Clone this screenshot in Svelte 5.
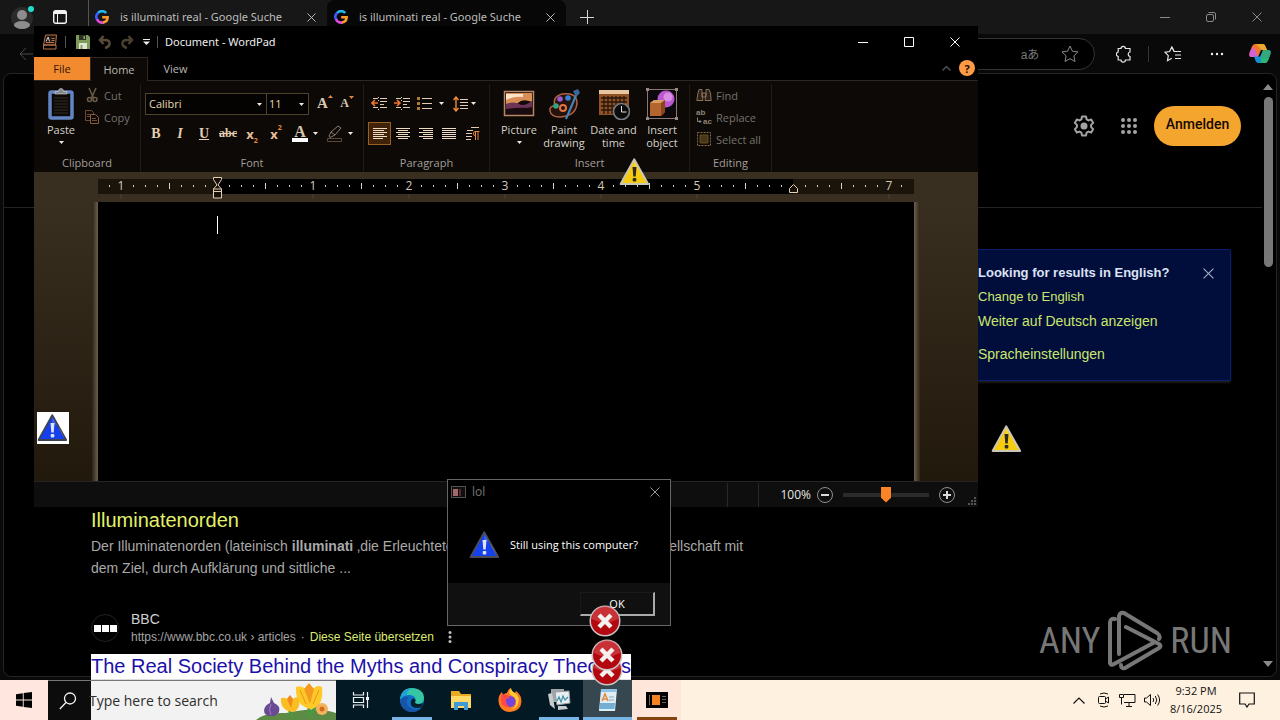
<script>
  let zoom = $state(50);
  let body = $state('');

  const tabs = [
    { title: 'is illuminati real - Google Suche', active: false },
    { title: 'is illuminati real - Google Suche', active: true }
  ];

  const formats = ['bold', 'italic', 'underline', 'strike', 'sub', 'sup'];
  const aligns = [
    { name: 'Align left', lines: [[0, 14], [0, 11], [0, 14], [0, 11], [0, 14], [0, 10]], on: true },
    { name: 'Center', lines: [[0, 14], [2, 12], [0, 14], [2, 12], [0, 14], [2, 12]] },
    { name: 'Align right', lines: [[0, 14], [4, 14], [0, 14], [4, 14], [0, 14], [4, 14]] },
    { name: 'Justify', lines: [[0, 14], [0, 14], [0, 14], [0, 14], [0, 14], [0, 14]] }
  ];

  // Ruler: one inch is 96 units, the left margin sits at 119.
  const origin = 119;
  const ticks = [];
  for (let i = -9; i <= 57; i++) {
    if (i % 8 !== 0) ticks.push({ x: origin + i * 12, half: i % 4 === 0 });
  }
  const inches = [-1, 1, 2, 3, 4, 5, 7];
</script>

{#snippet google()}
  <svg class="g" width="14" height="14" viewBox="0 0 14 14" fill="none" stroke-width="2.6" aria-hidden="true">
    <path d="M11.2 3A5.5 5.5 0 0 0 3 3" stroke="#22b8f0" />
    <path d="M3.2 2.8A5.5 5.5 0 0 0 2.2 9.6" stroke="#3a5cff" />
    <path d="M2 9.3A5.5 5.5 0 0 0 8.4 12.4" stroke="#e04be0" />
    <path d="M8 12.5A5.5 5.5 0 0 0 12.6 7.2H7.2" stroke="#ff9a30" />
  </svg>
{/snippet}

{#snippet cross(s)}
  <svg width={s} height={s} viewBox="0 0 10 10" fill="none" stroke="currentColor" aria-hidden="true"><path d="M.5.5l9 9M9.5.5l-9 9" /></svg>
{/snippet}

{#snippet caret()}
  <svg class="caret" width="5" height="3" viewBox="0 0 5 3" aria-hidden="true"><path d="M0 0h5L2.500 3z" fill="#f2e9dc" /></svg>
{/snippet}

{#snippet triangle(fill, edge, mark)}
  <svg width="32" height="32" viewBox="1 0 32 32" aria-hidden="true">
    <path d="M15.600 2.500Q16.400 1.600 17.200 2.900L31 27.500Q31.400 29 30 29H3Q1 29 2 27z" fill={edge} />
    <path d="M16.300 5L28.600 27H4z" fill={fill} />
    <path d="M16.300 5L28.600 27Q24 13 16.300 11z" fill="#fff" opacity=".18" />
    <path d="M14.500 11h4l-.8 9.500h-2.400z" fill={mark} />
    <rect x="14.700" y="22" width="3.600" height="3.400" rx=".8" fill={mark} />
  </svg>
{/snippet}

{#snippet failure()}
  <svg width="32" height="32" viewBox="0 0 32 32" aria-hidden="true">
    <circle cx="16" cy="16" r="15.500" fill="#c9c5c5" />
    <circle cx="16" cy="16" r="14" fill="#b3080f" />
    <path d="M3 14a13 13 0 0 1 26 0q-13 7-26 0z" fill="#d8565a" opacity=".55" />
    <path d="M10 10l12 12M22 10L10 22" stroke="#f5f1ee" stroke-width="4.400" />
  </svg>
{/snippet}

<div class="desktop">
  <section class="browser" aria-label="Browser">
    <div class="strip">
      <button class="avatar" aria-label="Profile">
        <svg width="28" height="26" viewBox="0 0 28 26"><circle cx="12" cy="14" r="11" fill="#2b2b2b" /><circle cx="12" cy="11" r="5" fill="#8d8d8d" /><ellipse cx="12" cy="21" rx="8" ry="4" fill="#8d8d8d" /><circle cx="21" cy="5" r="3" fill="#1fe0d0" /></svg>
      </button>
      <button class="tabmenu" aria-label="Tab actions">
        <svg width="14" height="14" viewBox="0 0 14 14" fill="none" stroke="#f4f4f4"><rect x=".7" y=".7" width="12.600" height="12.600" rx="2" stroke-width="1.400" /><path d="M1 2.500h12" stroke-width="3" /><path d="M4.500 4v9" /></svg>
      </button>
      {#each tabs as tab}
        <div class="tab" class:active={tab.active}>
          {@render google()}
          <span class="tabname">{tab.title}</span>
          <button aria-label="Close tab">{@render cross(9)}</button>
        </div>
      {/each}
      <button class="newtab" aria-label="New tab">
        <svg width="14" height="14" viewBox="0 0 14 14" stroke="#d8d8d8"><path d="M7.500 0v14M0 7.500h14" /></svg>
      </button>
      <div class="controls dim">
        <button aria-label="Minimize"><svg width="10" height="10" viewBox="0 0 10 10" stroke="currentColor"><path d="M0 5.500h10" /></svg></button>
        <button aria-label="Restore"><svg width="10" height="10" viewBox="0 0 10 10" stroke="currentColor" fill="none"><rect x=".5" y="2.500" width="7" height="7" rx="1.500" /><path d="M2.500.5H8Q9.500.5 9.500 2v5.500" /></svg></button>
        <button aria-label="Close">{@render cross(10)}</button>
      </div>
    </div>

    <div class="toolbar">
      <button class="back" aria-label="Back"><svg width="14" height="14" viewBox="0 0 14 14" fill="none" stroke="#4a4a4a"><path d="M14 7H1M7 1L1 7l6 6" /></svg></button>
      <div class="address">
        <button aria-label="Translate" class="lang">aあ</button>
        <button aria-label="Favorite"><svg width="18" height="18" viewBox="0 0 18 18" fill="none" stroke="#8a8a8a"><path d="M9 1l2.400 5.200 5.600.7-4.100 3.900 1.100 5.700L9 13.700l-5 2.800 1.100-5.700L1 6.900l5.600-.7z" /></svg></button>
      </div>
      <button aria-label="Extensions"><svg width="16" height="18" viewBox="0 0 16 18" fill="none" stroke="#e6e6e6" stroke-width="1.200"><path d="M5 3.500a2.200 2.200 0 0 1 4.400 0H14V7a2.300 2.300 0 0 0 0 4.500V15H9.400a2.200 2.200 0 0 1-4.400 0H2.200V11.500a2.300 2.300 0 0 1 0-4.500V3.500z" /></svg></button>
      <i class="rule"></i>
      <button aria-label="Favorites"><svg width="18" height="16" viewBox="0 0 18 16" fill="none" stroke="#e6e6e6" stroke-width="1.200"><path d="M10 5.500L7.800 1 5.600 5.500 1 6.200l3.300 3.400-.8 5.100 4.300-2.400M8 1l2.200 4.500H17M11 9h6M11 12.500h6" /></svg></button>
      <button aria-label="More"><svg width="14" height="4" viewBox="0 0 14 4" fill="#f0f0f0"><circle cx="2" cy="2" r="1.200" /><circle cx="7" cy="2" r="1.200" /><circle cx="12" cy="2" r="1.200" /></svg></button>
      <button class="copilot" aria-label="Copilot">
        <svg width="22" height="21" viewBox="0 0 22 21">
          <path d="M6 1h8q2 0 2.700 3L18 7h-6L9 14H3Q-.5 14 .6 10L3 3.500Q4 1 6 1z" fill="#f2762e" />
          <path d="M1 8l4-4 4 10H3Q-.5 14 .6 10z" fill="#d261d8" />
          <path d="M7 1h7q2 0 2.700 3L18 7h-5z" fill="#e9a92c" />
          <path d="M16 20H9q-2 0-2.700-3L5 13.500h6L14 7h5q3.500 0 2.400 4L19 17.500Q18 20 16 20z" fill="#168fd8" />
          <path d="M14 7h5q3.500 0 2.400 4l-1.200 3.500H11.500z" fill="#35a87b" />
          <path d="M11.500 14.500h8.600L19 17.500Q18 20 16 20h-4z" fill="#2bb673" />
        </svg>
      </button>
    </div>

    <div class="page">
      <main>
        <header>
          <button aria-label="Settings"><svg width="22" height="22" viewBox="0 0 22 22"><path d="M9 1.500h4l.6 2.800 1.900 1.100 2.700-.9 2 3.400-2.100 2v2.200l2.100 2-2 3.400-2.700-.9-1.900 1.100-.6 2.800H9l-.6-2.800-1.900-1.100-2.700.9-2-3.400 2.100-2V9.900l-2.100-2 2-3.400 2.700.9 1.900-1.100z" fill="none" stroke="#a3a3a3" stroke-width="2" stroke-linejoin="round" /><circle cx="11" cy="11" r="3.500" fill="#a3a3a3" /></svg></button>
          <button class="grid" aria-label="Google apps"><svg width="18" height="18" viewBox="0 0 18 18" fill="#a3a3a3">{#each [3, 9, 15] as y}{#each [3, 9, 15] as x}<circle cx={x} cy={y} r="2" />{/each}{/each}</svg></button>
          <button class="signin">Anmelden</button>
        </header>
        <aside>
          <div class="asidehead"><strong>Looking for results in English?</strong><button aria-label="Dismiss">{@render cross(11)}</button></div>
          <a class="small" href="#en">Change to English</a>
          <a href="#de">Weiter auf Deutsch anzeigen</a>
          <a class="last" href="#lang">Spracheinstellungen</a>
        </aside>
        <article>
          <h3><a href="#orden">Illuminatenorden</a></h3>
          <p>Der Illuminatenorden (lateinisch <b>illuminati</b> ‚die Erleuchteten‘) war eine kurzlebige Geheimgesellschaft mit<br />dem Ziel, durch Aufklärung und sittliche ...</p>
          <div class="source">
            <span class="logo"><i></i><i></i><i></i></span>
            <div>
              <div class="name">BBC</div>
              <div class="url"><span>https://www.bbc.co.uk › articles</span><span>·</span><a href="#translate">Diese Seite übersetzen</a><button aria-label="About this result"><svg width="4" height="12" viewBox="0 0 4 12" fill="#c0c0c0"><circle cx="2" cy="1.500" r="1.500" /><circle cx="2" cy="6" r="1.500" /><circle cx="2" cy="10.500" r="1.500" /></svg></button></div>
            </div>
          </div>
          <h3 class="selected"><a href="#bbc">The Real Society Behind the Myths and Conspiracy Theories</a></h3>
        </article>
      </main>
      <div class="scroll">
        <svg width="10" height="6" viewBox="0 0 10 6"><path d="M5 0l5 6H0z" fill="#8a8a8a" /></svg>
        <i></i>
        <svg class="down" width="10" height="6" viewBox="0 0 10 6"><path d="M0 0h10L5 6z" fill="#8a8a8a" /></svg>
      </div>
    </div>
  </section>

  <footer class="taskbar">
    <button class="start" aria-label="Start"><svg width="16" height="16" viewBox="0 0 16 16" fill="#000"><path d="M0 2.200l6.800-1v6.300H0zM7.700 1.100L16 0v7.500H7.700zM0 8.400h6.800v6.400L0 13.800zM7.700 8.400H16V16l-8.300-1.100z" /></svg></button>
    <label class="search">
      <svg width="18" height="18" viewBox="0 0 18 18" fill="none" stroke="#f4f4f4" stroke-width="1.300"><circle cx="11" cy="6.500" r="5.500" /><path d="M7 10.500L.8 17" /></svg>
      <input type="text" placeholder="Type here to search" aria-label="Search" />
      <svg class="flowers" width="80" height="38" viewBox="0 0 80 38">
        <path d="M0 38q8-8 30-7 30-7 50 0v7z" fill="#5d8a45" />
        <path d="M53 22v14M33 27l4 10M52 35l10-13" stroke="#4a9a3c" stroke-width="3" fill="none" />
        <path d="M15 15l3 6q7 3 5 9-3 5-8 4-7 0-7-6 1-5 6-7z" fill="#6a4a92" /><path d="M15 22q-3 6 0 11" stroke="#9b7bc0" fill="none" />
        <path d="M25 16q4-1 6 1 3-5 6 0 3-3 6-1 2 13-7 14-12-2-11-14z" fill="#fbbd21" /><path d="M31 17l3-4 3 4-2 9z" fill="#f08a1c" />
        <path d="M40 5q6-2 9 2 4-8 8 0 4-5 9-2 2 20-11 22-16-3-15-22z" fill="#ffc928" /><path d="M48 7l5-6 5 6-4 15z" fill="#f59a20" /><path d="M44 8l6 14M63 8l-6 14" stroke="#e9961b" fill="none" />
        <circle cx="66" cy="27" r="6" fill="#f4b45d" /><circle cx="66" cy="27" r="2.500" fill="#d46a1e" />
      </svg>
    </label>
    <div class="apps">
      <button aria-label="Task view"><svg width="18" height="18" viewBox="0 0 18 18" fill="none" stroke="#f0f0f0" stroke-width="1.200"><path d="M1.500 1v3h10V1M1.500 17v-3h10v3M1.500 6.500h10v5h-10zM15.500 1v16" /><path d="M14 6h3v3h-3z" fill="#f0f0f0" stroke="none" /></svg></button>
      <button class="open" aria-label="Edge"><svg width="24" height="24" viewBox="0 0 24 24"><circle cx="12" cy="12" r="12" fill="#0f6fc8" /><path d="M.2 11Q1.500 0 12.500 0 24 1 24 10.500q-.5 5.500-6 5.500-4.500 0-3-2.500Q17 8 10 7 3.500 6.500.2 11z" fill="#35c6a4" /><path d="M.2 11Q1.500 1 12 0q-6 3-5 7Q2.500 8 .2 11z" fill="#1ba1dc" /><path d="M9 9q-5 5 0 10 6 5 12.500.5Q17 25 9.500 23.700 0 20 .3 12 4 7.500 9 9z" fill="#1754a6" /><path d="M15.500 13q-1.500 3 2.500 3 3.500.2 5-1.500-.3 3.500-2 5Q13 21 11 17q-1-5 2-6.500 3 .5 2.500 2.500z" fill="#06202c" /></svg></button>
      <button aria-label="File Explorer"><svg width="22" height="20" viewBox="0 0 22 20"><path d="M1 1h8l2 3h10v14H1z" fill="#e9a921" /><path d="M1 6h20v12H1z" fill="#ffd968" /><path d="M4 12h14v8h-4v-4H8v4H4z" fill="#3f9ad6" /></svg></button>
      <button aria-label="Firefox"><svg width="24" height="24" viewBox="0 0 24 24"><path d="M12 24C4 24 .5 18 .5 12 .5 8 2 6 4 4l1 3q2-2 4-2 1-4 4-5 0 3 4 5l1-2q5.500 4 5.500 10.500Q23 23 12 24z" fill="#ff7a1f" /><path d="M13 0q0 3 4 5 5 4 3.500 10Q18 22 12 21.500q7-2 6-9-1-4-6-6-2-2 1-6.500z" fill="#ffca35" /><circle cx="12" cy="13.500" r="5.500" fill="#7544dd" /><path d="M3 7q5-2 9 2-1 2-4 2-1 5 4 8-8 1-9-6z" fill="#ff4a45" /></svg></button>
      <button class="open" aria-label="System monitor"><svg width="24" height="22" viewBox="0 0 24 22"><path d="M4 0h13v13H4z" fill="#9fa4a8" /><path d="M8 3l14-1 1 12-13 2z" fill="#e7edf0" stroke="#969c9f" /><path d="M10 12l2-4 2 5 2-6 2 4 3-3" fill="none" stroke="#3b8da9" stroke-width="1.200" /><path d="M11 17h8l2 3-10 1zM1 5l4-1 3 16-5-4z" fill="#c7cbce" /></svg></button>
      <button class="open current" aria-label="WordPad"><svg width="20" height="22" viewBox="0 0 20 22"><path d="M3 0h16l-2 22H1z" fill="#e1edf5" /><path d="M3 0h16v3H3z" fill="#8fc2e3" /><path d="M2 14h15l-.5 6H1.500z" fill="#6fb1db" /><path d="M11 8h5M11 11h5M4 16h11" stroke="#87a9be" /><path d="M4 12l3-7 3 7M5 10h4" stroke="#e08a3a" stroke-width="1.500" fill="none" /></svg></button>
      <button class="open payload" aria-label="lol"><svg width="22" height="16" viewBox="0 0 22 16"><path d="M0 0h22v16H0z" /><path d="M6 3h8v10H6z" fill="#f58220" /><path d="M3.500 3v10M16 4.500h4M16 7.500h4M16 10.500h4" stroke="#6d655c" /></svg></button>
    </div>
    <div class="tray">
      <svg width="12" height="7" viewBox="0 0 12 7" fill="none" stroke="#111" stroke-width="1.200"><path d="M.5 6.500L6 1l5.500 5.500" /></svg>
      <svg width="14" height="16" viewBox="0 0 14 16" fill="none" stroke="#111"><path d="M3 2q4-2 8 0M3 14q4 2 8 0M1.500 5.500q0-1 1-1h5q1 0 1 1v5q0 1-1 1h-5q-1 0-1-1zM8.500 7l3-2v6l-3-2" /></svg>
      <svg width="17" height="14" viewBox="0 0 17 14" fill="none" stroke="#111"><path d="M5 1.500h11v8H5M.5 1.500h4v3h-4zM2.500 4.500v7M7 13.500h6M10 10v3" /></svg>
      <svg width="17" height="14" viewBox="0 0 17 14" fill="none" stroke="#111"><path d="M.5 5v4h2l4 3.500V1.500L2.500 5zM9 5q1.500 2 0 4M11.300 3q3 4 0 8M13.600 1.500q4 5.500 0 11" /></svg>
      <div class="clock"><span>9:32 PM</span><span>8/16/2025</span></div>
      <svg width="16" height="16" viewBox="0 0 16 16" fill="none" stroke="#111" stroke-width="1.200"><path d="M.7 1h14.600v11H10l-2 3-2-3H.7z" /></svg>
    </div>
  </footer>

  <section class="wordpad" aria-label="WordPad">
    <div class="titlebar">
      <svg width="14" height="16" viewBox="0 0 14 16" fill="none" stroke="#b5754a"><path d="M2.500 1h11l-1 10h-12z" fill="#20130b" /><path d="M.5 11h12.500v4H.5zM8.500 4.500h3M8.500 6.500h3M3 8.500h8" /><path d="M3 7.500L5.200 3l1.300 4.500" stroke="#cad4db" /></svg>
      <i></i>
      <button aria-label="Save"><svg width="14" height="14" viewBox="0 0 14 14"><path d="M0 0h12l2 2v12H0z" fill="#7f9a59" /><path d="M3 0h7v5H3z" fill="#2a3320" /><path d="M3 8h8v6H3z" fill="#dfe6d3" /><path d="M7.500 1h1.500v3H7.500zM4.500 10h2v4h-2z" fill="#89a068" /></svg></button>
      <button aria-label="Undo"><svg width="14" height="14" viewBox="0 0 14 14" fill="none" stroke="#5a4a38" stroke-width="2.500"><path d="M2 5h5q5 0 4.500 4-.5 3-4.500 4M5.500 1L2 5l3.500 4" /></svg></button>
      <button aria-label="Redo"><svg width="14" height="14" viewBox="0 0 14 14" fill="none" stroke="#4b4030" stroke-width="2.500"><path d="M12 5H7Q2 5 2.500 9q.5 3 4.500 4M8.500 1L12 5 8.500 9" /></svg></button>
      <button class="custom" aria-label="Customize toolbar"><svg width="7" height="6" viewBox="0 0 7 6"><path d="M0 .5h7" stroke="#eee" /><path d="M0 2.500h7L3.500 6z" fill="#eee" /></svg></button>
      <i></i>
      <span class="wtitle">Document - WordPad</span>
      <div class="controls">
        <button aria-label="Minimize"><svg width="10" height="10" viewBox="0 0 10 10" stroke="currentColor"><path d="M0 5.500h10" /></svg></button>
        <button aria-label="Maximize"><svg width="10" height="10" viewBox="0 0 10 10" stroke="currentColor" fill="none"><path d="M.5.500h9v9h-9z" /></svg></button>
        <button aria-label="Close">{@render cross(10)}</button>
      </div>
    </div>
    <nav>
      <button class="file">File</button>
      <button class="home">Home</button>
      <button class="view">View</button>
      <button class="fold" aria-label="Collapse ribbon"><svg width="9" height="5" viewBox="0 0 9 5" fill="none" stroke="#4a5057" stroke-width="1.500"><path d="M.5 4.500l4-4 4 4" /></svg></button>
      <button class="help" aria-label="Help">?</button>
    </nav>

    <div class="ribbon">
      <div class="group clip">
        <div class="tools">
          <button class="big"><svg width="26" height="32" viewBox="0 0 26 32"><rect x="2" y="4" width="22" height="26" rx="1.500" fill="#0c0906" stroke="#6385c4" stroke-width="3.500" /><path d="M7 6V3.500h3.500q0-3 2.500-3t2.500 3H19V6z" fill="#85878a" stroke="#c6c8ca" stroke-width=".7" /><path d="M6 10h14M6 13h14M6 16h14M6 19h14M6 22h14M6 25h14" stroke="#332c24" /></svg><span>Paste</span>{@render caret()}</button>
          <div class="rows">
            <button><svg width="16" height="16" viewBox="0 0 16 16" fill="none" stroke="#6e5d48" stroke-width="1.500"><path d="M5 1l4.500 10M12 1L7.500 11" /><circle cx="5.500" cy="12.500" r="2" /><circle cx="11" cy="12.500" r="2" /></svg>Cut</button>
            <button><svg width="16" height="16" viewBox="0 0 16 16" fill="#0c0906" stroke="#6e4a30"><path d="M1.500 1.500h6l2 2v8h-8z" /><path d="M6.500 5.500h5l3 3v6h-8z" stroke="#8a5c3c" /><path d="M8 9.500h4M8 11.500h5M3 5.500h3M3 7.500h3" /></svg>Copy</button>
          </div>
        </div>
        <div class="label">Clipboard</div>
      </div>

      <div class="group font">
        <div class="tools col">
          <div class="line first">
            <div class="combo family"><select aria-label="Font family"><option>Calibri</option></select>{@render caret()}</div>
            <div class="combo size"><select aria-label="Font size"><option>11</option></select>{@render caret()}</div>
            <button class="grow" aria-label="Grow font">A<svg width="5" height="3" viewBox="0 0 5 3"><path d="M2.500 0L5 3H0z" fill="#e08440" /></svg></button>
            <button class="shrink" aria-label="Shrink font">A<svg width="5" height="3" viewBox="0 0 5 3"><path d="M0 0h5L2.500 3z" fill="#e08440" /></svg></button>
          </div>
          <div class="line formats">
            {#each formats as f}
              <button class="fmt {f}" aria-label={f}>
                {#if f === 'bold'}B{:else if f === 'italic'}I{:else if f === 'underline'}U{:else if f === 'strike'}abc{:else if f === 'sub'}x<sub>2</sub>{:else}x<sup>2</sup>{/if}
              </button>
            {/each}
            <button class="colour" aria-label="Text color"><span>A</span>{@render caret()}</button>
            <button class="colour" aria-label="Highlight"><svg width="17" height="17" viewBox="0 0 17 17" fill="none" stroke="#8d7c6c"><path d="M3 11L5 7l7-6 3 2-6 7-5 2.500zM5 7l4 3" /><path d="M1.500 13.500h14v3h-14z" stroke="#5c4638" /></svg>{@render caret()}</button>
          </div>
        </div>
        <div class="label">Font</div>
      </div>

      <div class="group para">
        <div class="tools col">
          <div class="line first">
            {#each [0, 1] as d}
              <button class="p" aria-label={d ? 'Increase indent' : 'Decrease indent'}><svg width="16" height="14" viewBox="0 0 16 14" stroke="#e2cdb4"><path d="M2 1.500h5M9 1.500h7M9 4.500h7M9 7.500h4M2 10.500h5M9 10.500h7M7.500 0v1M7.500 3v1M7.500 12v1" /><path d={d ? 'M0 6h6M3 3l3 3-3 3' : 'M7 6H1M4 3L1 6l3 3'} stroke="#ef7430" stroke-width="1.600" fill="none" /></svg></button>
            {/each}
            <button class="pd" aria-label="Bullets"><svg width="15" height="14" viewBox="0 0 15 14"><path d="M5 1.500h10M5 6.500h10M5 11.500h10" stroke="#e2cdb4" /><path d="M0 0h3v3H0zM0 5h3v3H0zM0 10h3v3H0z" fill="#b07a34" /></svg>{@render caret()}</button>
            <button class="pd tight" aria-label="Line spacing"><svg width="15" height="16" viewBox="0 0 15 16" stroke="#e2cdb4"><path d="M7 3.500h8M7 6.500h8M7 9.500h8M7 12.500h8" /><path d="M3 1v14M.5 4L3 1l2.500 3M.5 12L3 15l2.500-3" fill="none" stroke="#f08a3a" stroke-width="1.400" /></svg>{@render caret()}</button>
          </div>
          <div class="line">
            {#each aligns as a}
              <button class="p" class:on={a.on} aria-label={a.name}><svg width="14" height="12" viewBox="0 0 14 12" stroke="#efdcc5">{#each a.lines as [s, e], i}<path d="M{s} {i * 2 + 0.5}h{e - s}" />{/each}</svg></button>
            {/each}
            <button class="p last" aria-label="Paragraph"><svg width="15" height="14" viewBox="0 0 15 14" stroke="#e2cdb4"><path d="M5 .5h8M1 3.500h6M0 6.500h6M0 9.500h6M0 12.500h5" /><path d="M9.500 4v9M12 4v9M13.500 4.500H9Q7 5 7.500 7t2 1.500" stroke="#e8823c" fill="none" /></svg></button>
          </div>
        </div>
        <div class="label">Paragraph</div>
      </div>

      <div class="group insert">
        <div class="tools">
          <button class="big"><svg width="32" height="32" viewBox="0 0 32 32"><path d="M1.500 3.500h29v24h-29z" fill="#120a08" stroke="#b8876a" stroke-width="1.500" /><path d="M3 5h26v9q-10-4-14 1T3 16z" fill="#d98e58" /><path d="M3 6h17v3q-9-1-17 3z" fill="#ffe3c9" /><path d="M3 16q8-3 13 0t13-3v6q-14 4-26 2z" fill="#6e3458" /><path d="M3 21q12-2 26-1v6H3z" fill="#190b10" /></svg><span>Picture</span>{@render caret()}</button>
          <button class="big wide"><svg width="32" height="32" viewBox="0 0 32 32"><path d="M14 6q14-2 15 8 0 14-17 15-9 0-10-6-1-5 5-5-3-9 7-12z" fill="#25120c" stroke="#b06243" stroke-width="1.500" /><circle cx="8" cy="18" r="2.800" fill="#33a184" /><circle cx="12" cy="11" r="2.800" fill="#9c5ad0" /><circle cx="20" cy="10" r="2.800" fill="#3682d8" /><circle cx="15" cy="20" r="3" fill="none" stroke="#e37344" stroke-width="2" /><path d="M29 5L18 31l6-14z" fill="#89b8dd" stroke="#4087bd" stroke-width="2" /><path d="M25 3l5-2 2 4-4 4z" fill="#38689b" /></svg><span>Paint<br />drawing</span></button>
          <button class="big wider"><svg width="32" height="32" viewBox="0 0 32 32"><path d="M1 2h30v25H1z" fill="#8f5126" /><path d="M1 2h30v4H1z" fill="#e8c7a0" /><path d="M3 10h26M3 14h26M3 18h26M3 22h26M6 8v18M10 8v18M14 8v18M18 8v18M22 8v18M26 8v18" stroke="#2a160b" stroke-width="1.300" /><circle cx="23.500" cy="23.500" r="8" fill="#0c0b0b" stroke="#727980" stroke-width="1.700" /><path d="M23.500 18v6h5" fill="none" stroke="#dce1e5" /></svg><span>Date and<br />time</span></button>
          <button class="big slim"><svg width="32" height="32" viewBox="0 0 32 32"><path d="M1.500 1.500h29v29h-29z" fill="#0b090b" stroke="#8b7770" /><circle cx="20" cy="11" r="8.500" fill="#b958cf" /><circle cx="22" cy="9" r="4.500" fill="#d98de5" /><path d="M4 15l4-3h11v12l-4 4H4z" fill="#b4652d" /><path d="M4 15l4-3h11l-4 3z" fill="#dc9c62" /><path d="M15 15l4-3v12l-4 4z" fill="#8c451b" /><path d="M0 0h3v3H0zM29 0h3v3h-3zM0 29h3v3H0zM29 29h3v3h-3z" fill="#958a85" /></svg><span>Insert<br />object</span></button>
        </div>
        <div class="label">Insert</div>
      </div>

      <div class="group edit">
        <div class="tools">
          <div class="rows">
            <button><svg width="16" height="16" viewBox="0 0 16 16" fill="#2c2118" stroke="#8b7158"><path d="M3 2.500h3v5l1 6H.8L2 6zM10 2.500h3L14.500 6l.7 7.500H9l1-6zM6 6h4v4H6z" /></svg>Find</button>
            <button><svg class="swap" width="16" height="18" viewBox="0 0 16 18"><text x="0" y="7">ab</text><text x="7" y="16">ac</text><path d="M1.500 9.500v4H5M3.500 12L5 13.500 3.500 15" fill="none" stroke="#8e8374" /></svg>Replace</button>
            <button><svg width="16" height="16" viewBox="0 0 16 16"><path d="M1.500 1.500h13v13h-13z" fill="none" stroke="#87694a" stroke-dasharray="2 1" /><path d="M4 4h8v8H4z" fill="#463718" stroke="#63501f" /></svg>Select all</button>
          </div>
        </div>
        <div class="label">Editing</div>
      </div>
    </div>

    <div class="ruler">
      <svg width="816" height="26" viewBox="0 0 816 26" aria-hidden="true">
        <path d="M0 6h816v15H0z" />
        <path d="M0 6h119v15H0zM695 6h121v15H695z" fill="#1b140b" />
        {#each ticks as t}
          <path d={t.half ? `M${t.x + 0.5} 10v6` : `M${t.x + 0.5} 12v2`} stroke="#d9cfc0" />
        {/each}
        {#each inches as n}
          <text x={origin + n * 96} y="17" text-anchor="middle" font-size="12" fill="#d6c9b4">{Math.abs(n)}</text>
          <path d="M{origin + n * 96} 21v5" stroke="#4c4131" />
        {/each}
        <g fill="#17110a" stroke="#e4d2b8"><path d="M115.500 4.500h8v2L120 12l3.500 4v9h-8v-9l3.500-4-3.500-5.500zM115.500 18.500h8M115.500 16h8" /><path d="M695.500 11.500l4 4v4h-8v-4z" /></g>
      </svg>
    </div>
    <div class="canvas">
      <div class="sheet"><textarea aria-label="Document text" bind:value={body}></textarea><i></i></div>
    </div>
    <div class="status">
      <i></i><i class="second"></i>
      <span>100%</span>
      <button aria-label="Zoom out"><svg width="16" height="16" viewBox="0 0 16 16" fill="none" stroke="#8f8f8f"><circle cx="8" cy="8" r="7.500" /><path d="M4 8h8" stroke="#dadada" stroke-width="2" /></svg></button>
      <input type="range" min="0" max="100" aria-label="Zoom" bind:value={zoom} />
      <button aria-label="Zoom in"><svg width="16" height="16" viewBox="0 0 16 16" fill="none" stroke="#8f8f8f"><circle cx="8" cy="8" r="7.500" /><path d="M4 8h8M8 4v8" stroke="#dadada" stroke-width="2" /></svg></button>
      <svg class="grip" width="8" height="8" viewBox="0 0 8 8" fill="#555"><path d="M6 0h2v2H6zM3 3h2v2H3zM6 3h2v2H6zM0 6h2v2H0zM3 6h2v2H3zM6 6h2v2H6z" /></svg>
    </div>
  </section>

  <section class="dialog" role="dialog" aria-label="lol">
    <div class="dtitle">
      <svg width="15" height="12" viewBox="0 0 15 12"><path d="M.5.5h14v11H.5z" fill="#140d0d" stroke="#555" /><path d="M2 3h5v7H2z" fill="#a3686c" /><path d="M8 3h2v7H8z" fill="#4d2c2e" /></svg>
      <span>lol</span>
      <button aria-label="Close">{@render cross(10)}</button>
    </div>
    <div class="message">{@render triangle('#1440ee', '#4b4b57', '#dfe4f5')}<span>Still using this computer?</span></div>
    <div class="actions"><button>OK</button></div>
  </section>

  <div class="stray warn1">{@render triangle('#f5cc12', '#c9c6bc', '#2c2a22')}</div>
  <div class="stray warn2">{@render triangle('#f5cc12', '#c9c6bc', '#2c2a22')}</div>
  <div class="stray info">{@render triangle('#1440ee', '#3e4250', '#dfe4f5')}</div>
  <div class="stray fail3">{@render failure()}</div>
  <div class="stray fail2">{@render failure()}</div>
  <div class="stray fail1">{@render failure()}</div>

  <div class="mark">
    <span>ANY</span>
    <svg width="56" height="62" viewBox="0 0 56 62" fill="none" stroke="#777" stroke-width="4" stroke-linejoin="round" stroke-linecap="round"><path d="M8 9Q3 8 3 13v40q1 3 4 1l41-22M12 44V6q1-4 5-3l33 20q4 3 2 6M19 17l33 17q3 2 0 4L18 58q-4 1-4-3" /></svg>
    <span>RUN</span>
  </div>
</div>

<style>
  :global(body) { margin: 0; background: #000; }
  * { box-sizing: border-box; }
  button { font: inherit; color: inherit; background: none; border: 0; padding: 0; margin: 0; display: flex; align-items: center; justify-content: center; }
  svg { display: block; flex: none; }
  a { text-decoration: none; }

  .desktop { position: relative; min-height: 100vh; display: flex; flex-direction: column; overflow: hidden; background: #000; color: #ccc; font: 12px/16px "Open Sans", "Noto Sans", sans-serif; }

  .browser { flex: 1; display: flex; flex-direction: column; background: #090909; }
  .strip { display: flex; height: 34px; background: #171717; }
  .avatar { width: 44px; padding-left: 4px; }
  .tabmenu { width: 32px; margin-right: 12px; }
  .tab { display: flex; align-items: center; gap: 11px; width: 239px; padding: 0 11px 0 6px; border-left: 1px solid #555; }
  .tab.active { background: #070707; border-color: #070707; border-radius: 8px 8px 0 0; }
  .tabname { flex: 1; white-space: nowrap; color: #bdbdbd; font-family: "Noto Sans", sans-serif; font-size: 11px; }
  .newtab { width: 42px; }
  .controls { display: flex; margin-left: auto; }
  .controls button { width: 46px; color: #fff; }
  .controls.dim button { color: #8a8a8a; }

  .toolbar { display: flex; align-items: center; height: 39px; }
  .toolbar button { width: 44px; height: 32px; }
  .toolbar .back { width: 40px; padding-left: 12px; }
  .address { flex: 1; display: flex; justify-content: flex-end; height: 32px; border: 1px solid #333; border-radius: 16px; background: #000; margin-right: 7px; padding-right: 4px; }
  .address button { width: 40px; height: 30px; }
  .address .lang { font: 12px "Liberation Sans", "Noto Sans CJK JP", sans-serif; color: #777; }
  .rule { width: 1px; height: 16px; background: #333; margin: 0 2px; }
  .toolbar .copilot { width: 41px; }

  .page { flex: 1; display: flex; margin: 0 3px 3px; border: 1px solid #242424; border-radius: 8px; background: #000; font-family: "Liberation Sans", Arial, sans-serif; }
  main { flex: 1; display: flex; flex-direction: column; }
  header { display: flex; justify-content: flex-end; gap: 5px; height: 134px; padding: 32px 21px 0 0; border-bottom: 1px solid #242424; }
  header button { width: 40px; height: 40px; }
  header .signin { width: 87px; padding-bottom: 4px; border-radius: 20px; background: #f4a52e; color: #140a00; font: 500 14px Roboto, sans-serif; }
  aside { align-self: flex-end; display: flex; flex-direction: column; width: 273px; height: 132px; margin: 41px 31px 0 0; padding: 11px 16px 0 19px; border: 1px solid #0b1f6e; border-radius: 2px; background: #010d3b; box-shadow: 0 2px 2px #1c1c1c; }
  .asidehead { display: flex; justify-content: space-between; align-items: center; height: 24px; color: #dbe3f5; font-size: 13px; }
  aside a { font-size: 14px; line-height: 24px; color: #cbe66c; }
  aside .small { font-size: 13px; }
  aside .last { margin-top: 9px; }
  .asidehead button { color: #a7b0c6; }
  article { padding: 126px 0 0 87px; margin-bottom: -4px; }
  h3 { margin: 0; font-size: 20px; line-height: 26px; font-weight: 400; }
  h3 a { color: #e2f06a; }
  p { margin: 2px 0 0; font-size: 14px; line-height: 22px; color: #a9a9a9; white-space: nowrap; }
  .source { display: flex; gap: 12px; align-items: center; height: 44px; margin: 27px 0 4px; }
  .logo { display: flex; align-items: center; justify-content: center; gap: 1px; width: 28px; height: 28px; border: 1px solid #222; border-radius: 50%; }
  .logo i { width: 7px; height: 7px; background: #fff; }
  .name { font-size: 14px; line-height: 18px; color: #d0d0d0; }
  .url { display: flex; align-items: center; gap: 5px; font-size: 12px; line-height: 18px; color: #a4a4a4; }
  .url a { color: #dcec70; }
  .url button { margin-left: 9px; }
  .selected { position: relative; width: max-content; background: #fff; border-bottom: 1px solid #ddd; line-height: 25px; }
  .selected a { color: #1c10a8; }
  .scroll { display: flex; flex-direction: column; align-items: center; width: 14px; padding: 10px 2px 9px 0; }
  .scroll i { width: 9px; height: 170px; margin-top: 7px; border-radius: 5px; background: #777; }
  .down { margin-top: auto; }

  .taskbar { display: flex; height: 40px; background: #fff1e0; }
  .start { width: 48px; background: #ffe6de; }
  .search { position: relative; display: flex; align-items: center; width: 288px; background: #0c0c0c; border-top: 1px solid #777; }
  .search > svg:first-child { margin-left: 11px; }
  .search input { flex: 1; align-self: stretch; min-width: 0; margin-left: 12px; padding: 0; border: 0; background: linear-gradient(90deg, #0c0c0c 2px, #f2f2f2 2px); font: 14px "Open Sans", sans-serif; color: #222; outline: 0; }
  .search input::placeholder { color: #2e2e2e; opacity: 1; }
  .search .flowers { position: absolute; right: 0; bottom: 0; }
  .apps { display: flex; background: #031a24; }
  .apps button { width: 49px; border-bottom: 3px solid transparent; border-top: 3px solid transparent; }
  .apps button:first-child { width: 51px; padding-right: 2px; }
  .apps .open { background: linear-gradient(#76b5e5, #76b5e5) bottom / 40px 3px no-repeat border-box; }
  .apps .current { background: linear-gradient(#76b5e5, #76b5e5) bottom / 49px 3px no-repeat border-box, #37474f; }
  .apps .payload { background: linear-gradient(#83450d, #83450d) bottom / 40px 3px no-repeat border-box, #ffe6da; }
  .tray { display: flex; align-items: center; gap: 8px; margin-left: auto; padding-right: 25px; color: #111; }
  .tray svg:first-child { margin-right: 4px; }
  .clock { display: flex; flex-direction: column; align-items: center; width: 54px; margin-right: 8px; line-height: 18px; white-space: nowrap; font-size: 11px; }

  .wordpad { position: absolute; left: 34px; right: 302px; top: 26px; display: flex; flex-direction: column; background: #000; font-size: 11px; line-height: 13px; color: #bdb8b2; }
  .titlebar { display: flex; align-items: center; height: 31px; padding-left: 9px; color: #eee; }
  .titlebar i { width: 1px; height: 12px; background: #555; }
  .titlebar > i:nth-of-type(1) { margin: 0 6px 0 8px; }
  .titlebar > button { width: 22px; }
  .titlebar .custom { width: 16px; margin-right: 3px; }
  .wtitle { margin-left: 7px; font-family: "Noto Sans", sans-serif; }
  .titlebar .controls { align-self: stretch; }
  nav { display: flex; height: 24px; border-bottom: 1px solid #2d2823; }
  nav .file { width: 56px; background: #f28a30; color: #2e1500; }
  nav .home { width: 58px; height: 24px; background: #0c0906; border: 1px solid #2d2823; border-bottom: 0; }
  nav .view { width: 55px; }
  nav .fold { width: 20px; margin-left: auto; }
  nav .help { width: 16px; height: 16px; margin: 3px 3px 0 3px; border-radius: 50%; background: #ff9a45; color: #1e0d00; font-weight: 700; }

  .ribbon { display: flex; height: 91px; padding-top: 3px; background: #0c0906; }
  .group { display: flex; flex-direction: column; border-right: 1px solid #211b14; }
  .tools { display: flex; flex: none; height: 70px; padding: 0 4px; }
  .label { text-align: center; line-height: 18px; height: 18px; color: #a39e98; }
  .clip { width: 107px; }
  .font { width: 223px; }
  .para { width: 126px; }
  .insert { width: 200px; }
  .insert .tools { padding: 0 6px; }
  .edit { width: 82px; }
  .edit .tools { padding: 0 6px; }
  .big { flex-direction: column; justify-content: flex-start; width: 46px; padding-top: 4px; text-align: center; color: #d6d1ca; white-space: nowrap; }
  .big svg:first-child { margin-bottom: 3px; }
  .big .caret { margin-top: 5px; }
  .big.wide { width: 44px; }
  .big.wider { width: 55px; }
  .big.slim { width: 42px; }
  .rows { display: flex; flex-direction: column; }
  .rows button { height: 22px; gap: 4px; justify-content: flex-start; color: #77726c; white-space: nowrap; }
  .swap { font: 700 8px "Liberation Sans", sans-serif; fill: #8e8374; overflow: visible; }
  .col { flex-direction: column; gap: 7px; padding-top: 8px; }
  .line { display: flex; align-items: center; height: 23px; }
  .combo { position: relative; display: flex; height: 22px; border: 1px solid #4e4130; background: #040302; }
  .combo select { width: 100%; appearance: none; border: 0; background: none; padding: 0 3px; font: inherit; color: #e6d6ae; }
  .combo .caret { position: absolute; right: 4px; top: 9px; }
  .family { width: 122px; }
  .size { width: 43px; margin-left: -1px; }
  .size select { padding: 0 2px; }
  .grow, .shrink { width: 24px; margin-left: 4px; font: 700 15px "Liberation Serif", serif; color: #d8c8b0; align-items: flex-start; }
  .shrink { width: 20px; margin-left: 0; font-size: 12px; }
  .fmt { width: 24px; height: 22px; font: 700 14px "Liberation Serif", serif; color: #e6cdb0; }
  .formats { margin-left: -1px; }
  .italic { font-style: italic; }
  .underline { text-decoration: underline; }
  .strike { font-size: 12px; text-decoration: line-through; }
  .sub, .sup { font: 700 13px "Open Sans", sans-serif; color: #e8c09b; }
  .sub sub, .sup sup { font-size: 7px; color: #ee8a40; }
  .sub sub { align-self: flex-end; }
  .sup sup { align-self: flex-start; }
  .colour { gap: 5px; width: 34px; }
  .colour span { width: 16px; border-bottom: 4px solid #fff; font: 700 16px/13px "Liberation Serif", serif; color: #d8c8b0; }
  .p { width: 24px; height: 23px; }
  .on { background: #3f2207; border: 1px solid #976026; }
  .last { margin-left: 2px; }
  aside .last { margin-left: 0; }
  .pd { justify-content: flex-start; gap: 7px; width: 38px; padding-left: 4px; }
  .pd.tight { gap: 3px; }

  .ruler { height: 30px; padding: 1px 0 0 64px; background: #382f20; overflow: hidden; }
  .canvas { display: flex; height: 279px; padding: 0 58px; background: linear-gradient(#382f20, #22190d); }
  .sheet { position: relative; flex: 1; display: flex; border: 0 solid; border-width: 0 6px; border-image: linear-gradient(90deg, #2d2418, #6d5f4b 6px, #6d5f4b calc(100% - 6px), #2d2418) 6; }
  .sheet textarea { flex: 1; border: 0; resize: none; outline: 0; background: #000; color: #fff; padding: 14px 120px; font: 15px/18px "Open Sans", sans-serif; }
  .sheet i { position: absolute; left: 119px; top: 14px; width: 1px; height: 18px; background: #fff; }

  .status { position: relative; display: flex; align-items: center; justify-content: flex-end; height: 26px; padding-right: 23px; background: #0e0e0e; border-top: 1px solid #252525; font-size: 12px; color: #e6e6e6; }
  .status > i { width: 1px; height: 24px; background: #292929; margin-right: 30px; }
  .status > .second { margin-right: 21px; }
  .status > span { margin-right: 6px; }
  .status input { appearance: none; width: 86px; height: 16px; margin: 0 10px; background: linear-gradient(#2b2b2b, #2b2b2b) center / 100% 4px no-repeat; }
  .status input::-webkit-slider-thumb { appearance: none; width: 10px; height: 16px; background: #fb8426; clip-path: polygon(0 0, 100% 0, 100% 70%, 50% 100%, 0 70%); }
  .grip { position: absolute; right: 2px; bottom: 2px; }

  .dialog { position: absolute; left: 447px; top: 479px; width: 224px; border: 1px solid #666; background: #000; font-size: 11px; }
  .dtitle { display: flex; align-items: center; gap: 6px; height: 24px; padding: 0 10px 0 3px; color: #777; font-size: 12px; }
  .dtitle button { margin-left: auto; color: #999; }
  .message { display: flex; align-items: center; gap: 9px; height: 79px; padding: 2px 0 0 21px; color: #fff; white-space: nowrap; }
  .actions { display: flex; justify-content: flex-end; height: 42px; padding: 9px 15px 0 0; background: #101010; }
  .actions button { width: 75px; height: 24px; border: 1px solid #191919; border-right: 2px solid #aaa; border-bottom: 2px solid #aaa; color: #fff; }

  .stray { position: absolute; pointer-events: none; }
  .warn1 { left: 619px; top: 156px; }
  .warn2 { left: 991px; top: 423px; }
  .info { left: 37px; top: 412px; background: #fff; }
  .fail1 { left: 589px; top: 605px; }
  .fail2 { left: 591px; top: 639px; }
  .fail3 { left: 591px; top: 654px; }

  .mark { position: absolute; right: 48px; bottom: 48px; display: flex; align-items: center; gap: 7px; color: #777; font: 36px/62px "Liberation Sans Narrow", "Roboto Condensed", "Liberation Sans", sans-serif; pointer-events: none; }
</style>
